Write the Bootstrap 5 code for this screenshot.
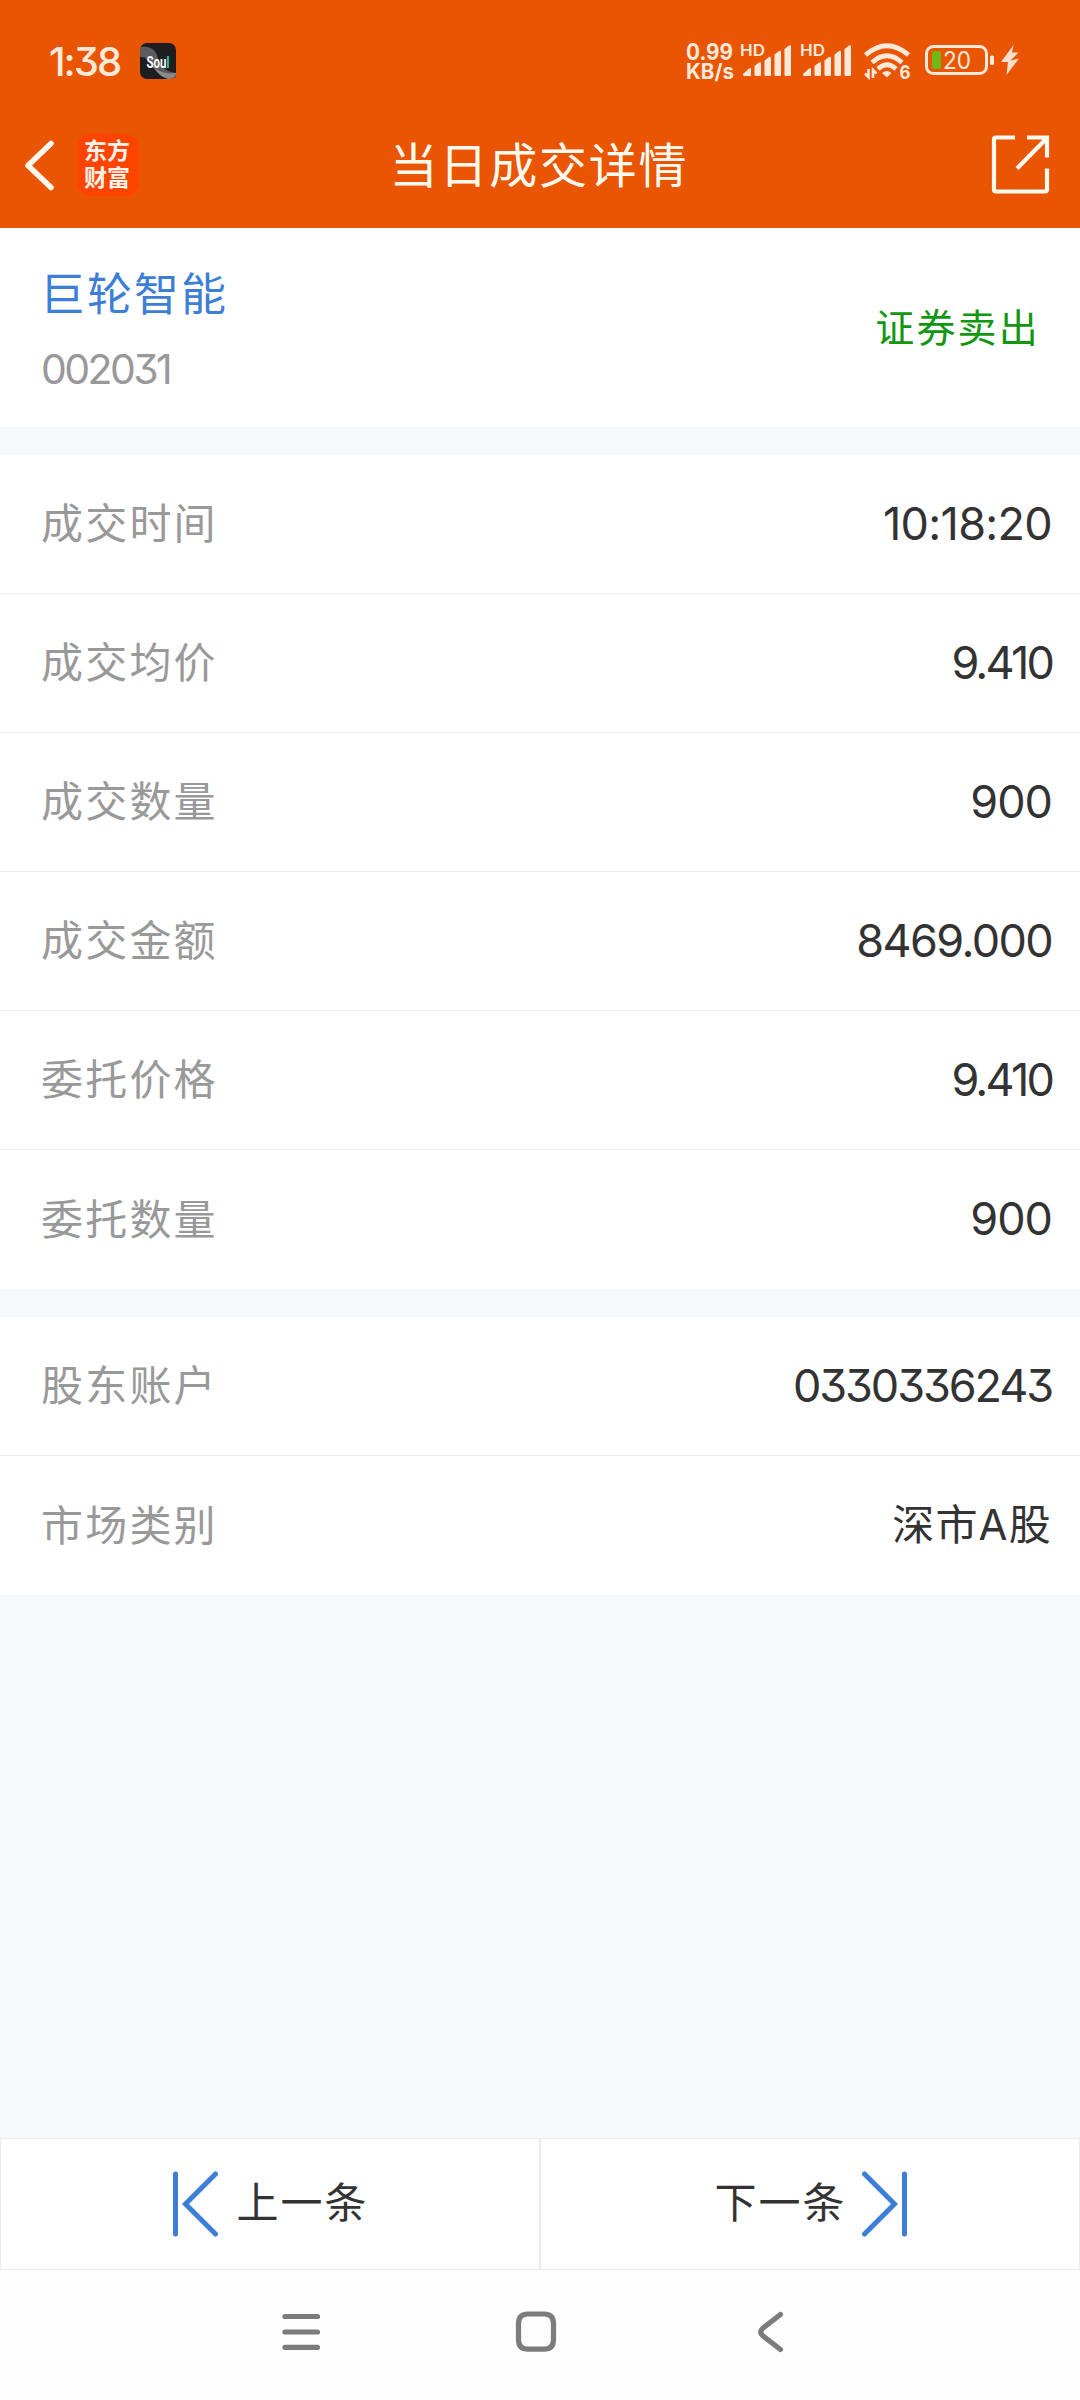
<!DOCTYPE html>
<html lang="zh-CN">
<head>
<meta charset="utf-8">
<meta name="viewport" content="width=device-width, initial-scale=1">
<title>当日成交详情</title>
<link href="https://cdn.jsdelivr.net/npm/bootstrap@5.3.0/dist/css/bootstrap.min.css" rel="stylesheet">
<style>
  body { font-family: Inter, "Noto Sans CJK SC", sans-serif; font-feature-settings: "cv09"; background: #f7f8fa; color: #333; width: 1080px; height: 2400px; line-height: 1; overflow: hidden; }
  svg { display: block; flex: none; }
  .top-area { background: #ea5504; height: 228px; }
  .status-line { height: 102px; padding: 20px 54px 0 49px; }
  .clock { font-size: 40px; font-weight: 500; color: #ffe9da; width: 91px; letter-spacing: -2px; padding-top: 2px; }
  .title-line { height: 126px; padding: 0 28px 0 20px; }
  .title-text { font-size: 48px; letter-spacing: 1.8px; color: #fffaf0; padding: 2px 0 0 6px; }
  .side-box { width: 200px; }
  .brand-tile { width: 62px; height: 62px; border-radius: 13px; background: #ff4400; color: #fff2ea; font-size: 23px; font-weight: 700; line-height: 27px; margin-left: 20px; padding-right: 2px; }
  .summary { height: 199px; padding: 3px 40px 0 40px; }
  .stock-name { font-size: 45px; letter-spacing: 2px; color: #3d7fd6; line-height: 60px; }
  .stock-code { font-size: 41px; color: #999; line-height: 50px; margin-top: 19px; letter-spacing: -2.6px; padding-left: 1px; }
  .side-label { font-size: 39px; letter-spacing: 2.2px; color: #119611; padding-bottom: 3px; }
  .group-gap { height: 28px; }
  .detail-row { height: 139px; padding: 0 28px 0 41px; border: 0; border-bottom: 1px solid #ecedef; border-radius: 0; background: #fff; }
  .row-label { font-size: 42px; letter-spacing: 2.2px; color: #999; }
  .row-value { font-size: 45px; color: #333; letter-spacing: -1px; padding-bottom: 2px; }
  .num-time { letter-spacing: -.7px; }
  .num-price { letter-spacing: -2.8px; }
  .num-sum { letter-spacing: -1.6px; }
  .num-account { letter-spacing: -2.1px; }
  .row-cjk { font-size: 42px; letter-spacing: 1.2px; }
  .pager { height: 132px; }
  .pager-btn { border: 1px solid #ebebeb; border-radius: 0; background: #fff; color: #333; font-size: 42px; letter-spacing: 2px; line-height: 1; }
  .pager-btn span { padding-bottom: 3px; }
  .next-inner { padding-left: 3px !important; }
  .next-icon { margin-left: 13px; }
  .sys-nav { height: 130px; background: #fdfdfd; }
</style>
</head>
<body class="d-flex flex-column">
<header class="top-area">
  <div class="status-line d-flex align-items-center justify-content-between">
    <div class="d-flex align-items-center">
      <span class="clock">1:38</span>
      <svg width="36" height="36" viewBox="0 0 36 36">
        <rect width="36" height="36" rx="7" fill="#1e1e20"/>
        <path d="M0 4Q13 2 17 12Q20 28 36 30L36 35Q18 34 11 22Q7 13 0 14Z" fill="#5c5c5e"/>
        <path d="M15 25Q23 32 36 30V31Q34 36 28 36Q18 33 15 25Z" fill="#8b8989"/>
        <text x="6.500" y="25" font-family="Roboto" font-weight="700" font-size="17" fill="#fff" textLength="23" lengthAdjust="spacingAndGlyphs">Sou<tspan fill="#20d3bd">l</tspan></text>
      </svg>
    </div>
    <svg width="346" height="44" viewBox="680 40 346 44" fill="#ffe9da" font-family="Inter">
      <text x="686" y="61" font-size="22.500" font-weight="700" textLength="47" lengthAdjust="spacingAndGlyphs">0.99</text>
      <text x="686" y="79.500" font-size="21" font-weight="700" textLength="48" lengthAdjust="spacingAndGlyphs">KB/s</text>
      <g id="cell">
        <text x="740" y="57" font-size="15.500" font-weight="600" textLength="25" lengthAdjust="spacingAndGlyphs">HD</text>
        <path d="M743 75L749 69.500Q751 68.500 751 70V77H745Q742.500 77 743 75Z"/>
        <path d="M754.500 67L759 63.500Q761 62.500 761 64.500V75.500Q761 77 759.500 77H756Q754.500 77 754.500 75.500Z"/>
        <path d="M764.500 61.500L769 58Q771 57 771 59V75.500Q771 77 769.500 77H766Q764.500 77 764.500 75.500Z"/>
        <path d="M774.500 55.500L779 52Q781 51 781 53V75.500Q781 77 779.500 77H776Q774.500 77 774.500 75.500Z"/>
        <path d="M784.500 50L789 46.500Q791 45.500 791 47.500V75.500Q791 77 789.500 77H786Q784.500 77 784.500 75.500Z"/>
      </g>
      <use href="#cell" x="60"/>
      <g fill="none" stroke="#ffe9da" stroke-width="4.800">
        <path d="M865.500 56Q887 37.500 908.500 56"/>
        <path d="M872 63.500Q887 50 902 63.500"/>
        <path d="M878 70Q887 61.500 896 70"/>
      </g>
      <path d="M882 74Q887 70 891.500 74L887 78.500Z"/>
      <path d="M868.500 70V78L865 74.500M873 79V71L876.500 74.500" fill="none" stroke="#ffe9da" stroke-width="2.600"/>
      <text x="899.500" y="79.500" font-size="19" font-weight="700" textLength="11" lengthAdjust="spacingAndGlyphs">6</text>
      <rect x="926.500" y="47.500" width="60" height="27" rx="7" fill="none" stroke="#ffe9da" stroke-width="3"/>
      <rect x="990" y="56.500" width="4" height="9.500" rx="1.500"/>
      <rect x="932" y="52" width="9" height="18" rx="2" fill="#6fb914"/>
      <text x="943" y="70" font-size="24.500" textLength="28" lengthAdjust="spacingAndGlyphs">20</text>
      <path d="M1013.500 46L1001 63H1008L1006.500 76L1019 59.500L1010.500 61.500L1018.500 53.500H1012Z" fill="#ffdfcc"/>
    </svg>
  </div>
  <div class="title-line d-flex align-items-center justify-content-between">
    <div class="side-box d-flex align-items-center">
      <svg width="37" height="54" viewBox="20 138 37 54"><path d="M51 143.500L28 165.500L51 187.500" fill="none" stroke="#fffaf0" stroke-width="5.500" stroke-linecap="round" stroke-linejoin="round"/></svg>
      <div class="brand-tile d-flex flex-column align-items-center justify-content-center"><span>东方</span><span>财富</span></div>
    </div>
    <h1 class="title-text mb-0 fw-normal">当日成交详情</h1>
    <div class="side-box d-flex justify-content-end">
      <svg width="62" height="62" viewBox="990 135 62 62"><path d="M1015 138.500H996Q994 138.500 994 140.500V190.500Q994 192.500 996 192.500H1045Q1047 192.500 1047 190.500V169.500M1027 138.500H1047V158.500M1046 140L1017 169.500" fill="none" stroke="#fffaf0" stroke-width="4.200"/></svg>
    </div>
  </div>
</header>
<section class="summary bg-white d-flex align-items-center justify-content-between">
  <div><div class="stock-name">巨轮智能</div><div class="stock-code">002031</div></div>
  <div class="side-label">证券卖出</div>
</section>
<div class="group-gap"></div>
<div class="list-group list-group-flush">
  <div class="list-group-item detail-row d-flex align-items-center justify-content-between"><span class="row-label">成交时间</span><span class="row-value num-time">10:18:20</span></div>
  <div class="list-group-item detail-row d-flex align-items-center justify-content-between"><span class="row-label">成交均价</span><span class="row-value num-price">9.410</span></div>
  <div class="list-group-item detail-row d-flex align-items-center justify-content-between"><span class="row-label">成交数量</span><span class="row-value">900</span></div>
  <div class="list-group-item detail-row d-flex align-items-center justify-content-between"><span class="row-label">成交金额</span><span class="row-value num-sum">8469.000</span></div>
  <div class="list-group-item detail-row d-flex align-items-center justify-content-between"><span class="row-label">委托价格</span><span class="row-value num-price">9.410</span></div>
  <div class="list-group-item detail-row d-flex align-items-center justify-content-between"><span class="row-label">委托数量</span><span class="row-value">900</span></div>
</div>
<div class="group-gap"></div>
<div class="list-group list-group-flush">
  <div class="list-group-item detail-row d-flex align-items-center justify-content-between"><span class="row-label">股东账户</span><span class="row-value num-account">0330336243</span></div>
  <div class="list-group-item detail-row d-flex align-items-center justify-content-between"><span class="row-label">市场类别</span><span class="row-value row-cjk">深市A股</span></div>
</div>
<footer class="mt-auto">
  <div class="pager d-flex">
    <button class="btn pager-btn w-50 d-flex align-items-center justify-content-center p-0" type="button">
      <svg class="me-3" width="49" height="66" viewBox="171 2171 49 66" fill="none" stroke="#3d7fd6" stroke-width="5" stroke-linecap="round"><path d="M175.500 2174V2234M215.500 2174L185.500 2204L215.500 2234"/></svg>
      <span>上一条</span>
    </button>
    <button class="btn pager-btn next-inner w-50 d-flex align-items-center justify-content-center p-0" type="button">
      <span>下一条</span>
      <svg class="next-icon" width="49" height="66" viewBox="860 2171 49 66" fill="none" stroke="#3d7fd6" stroke-width="5" stroke-linecap="round"><path d="M904.500 2174V2234M864.500 2174L894.500 2204L864.500 2234"/></svg>
    </button>
  </div>
  <nav class="sys-nav d-flex justify-content-center">
    <svg width="1080" height="130" viewBox="0 2270 1080 130" fill="none" stroke="#7c7c7c" stroke-width="5.200" stroke-linecap="round" stroke-linejoin="round">
      <path d="M285 2316.500H317.500M285 2332H317.500M285 2347.300H317.500"/>
      <path d="M528 2314H544Q553.500 2314 553.500 2323.500V2339.500Q553.500 2349.200 544 2349.200H528Q518.500 2349.200 518.500 2339.500V2323.500Q518.500 2314 528 2314Z"/>
      <path d="M780.500 2314.500L762.500 2328.500Q759 2332 762.500 2335.500L780.500 2349.500"/>
    </svg>
  </nav>
</footer>
<script src="https://cdn.jsdelivr.net/npm/bootstrap@5.3.0/dist/js/bootstrap.bundle.min.js"></script>
</body>
</html>
